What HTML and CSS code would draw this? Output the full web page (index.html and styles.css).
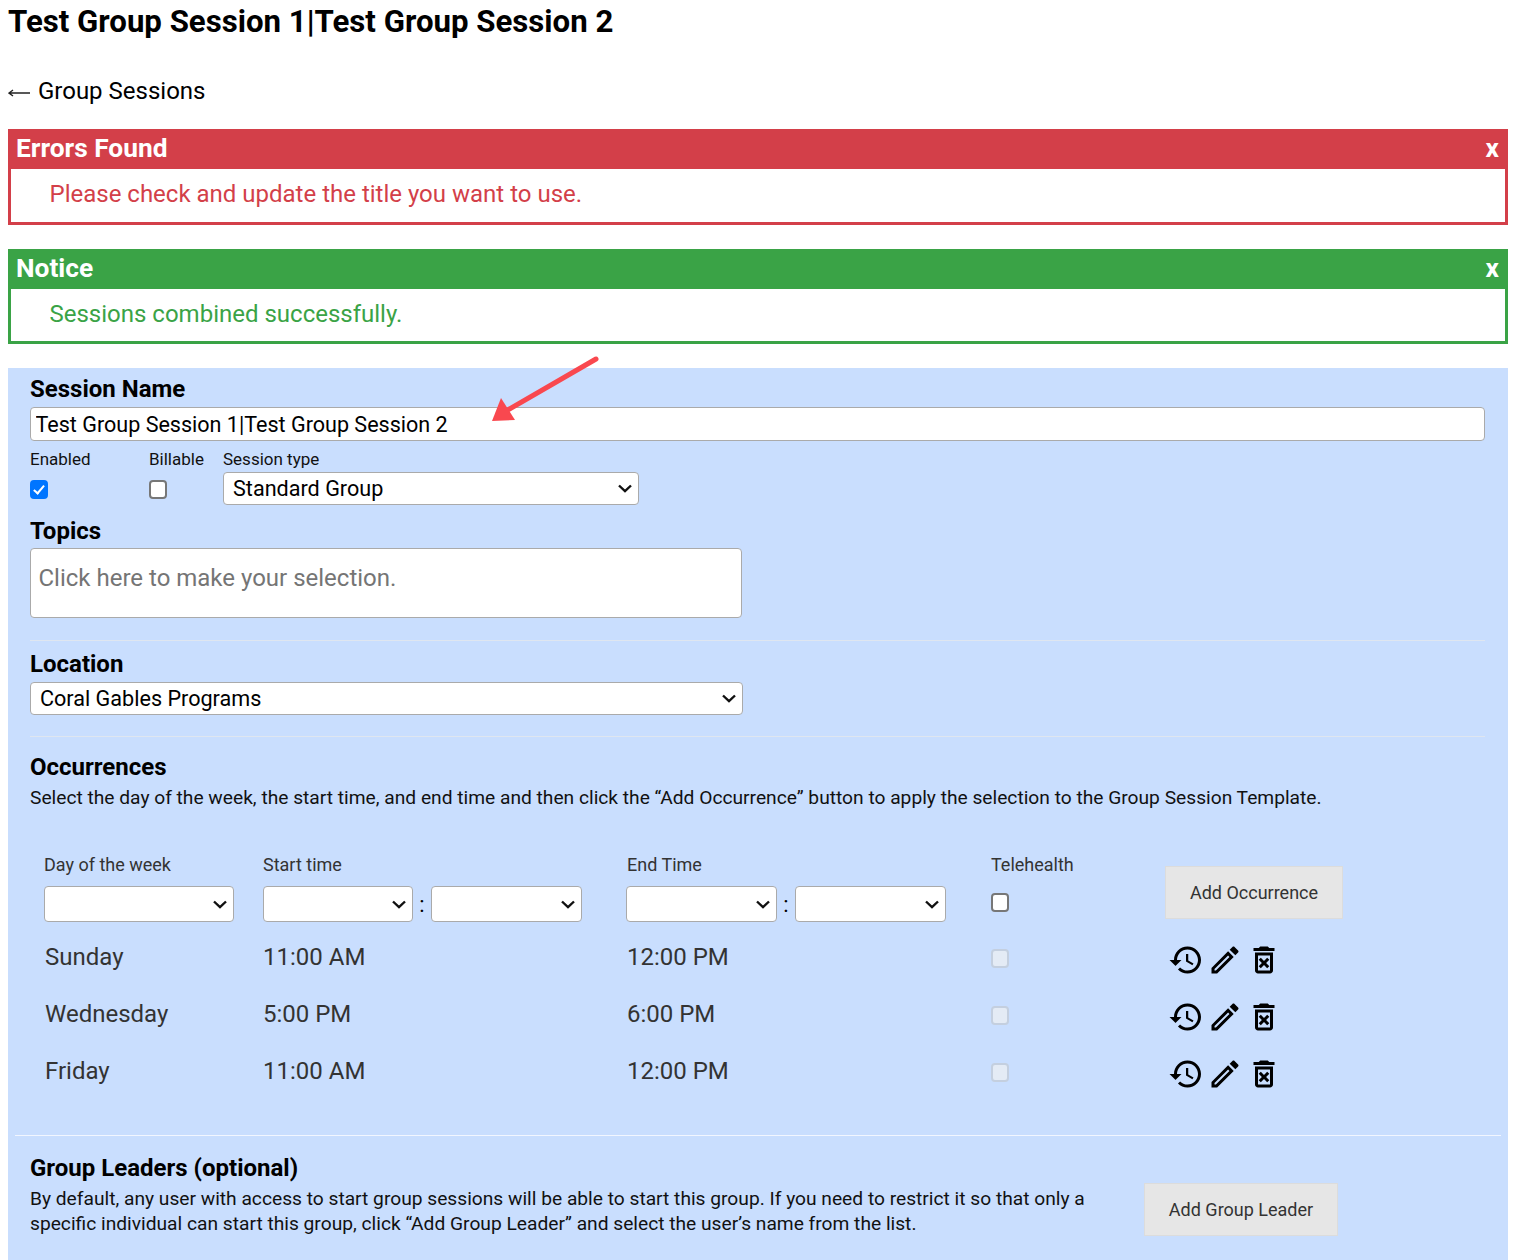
FILE: index.html
```html
<!DOCTYPE html>
<html>
<head>
  <meta charset="UTF-8">
  <title>Test Group Session</title>
  <link rel="stylesheet" href="styles.css">
</head>
<body>
  <h1 class="page-title">Test Group Session 1|Test Group Session 2</h1>
  <a class="back-link" href="#"><svg class="back-arrow" viewBox="0 0 24 10"><path d="M1 5H22M5 2L1 5L5 8" fill="none" stroke="#222" stroke-width="1.4"/></svg> Group Sessions</a>

  <div class="alert alert-error">
    <div class="alert-head"><span>Errors Found</span><span>x</span></div>
    <div class="alert-body">Please check and update the title you want to use.</div>
  </div>

  <div class="alert alert-notice">
    <div class="alert-head"><span>Notice</span><span>x</span></div>
    <div class="alert-body">Sessions combined successfully.</div>
  </div>

  <svg class="callout" viewBox="0 0 110 70" width="110" height="70">
    <path d="M105 5 L15 57" stroke="#f9484f" stroke-width="5" stroke-linecap="round" fill="none"/>
    <path d="M1 67 L10 44 L24 66 Z" fill="#f9484f"/>
  </svg>

  <form class="panel">
    <div class="section">
      <label class="heading">Session Name</label>
      <input class="text-input" type="text" value="Test Group Session 1|Test Group Session 2">

      <div class="options">
        <div class="opt-enabled">
          <label class="small-label">Enabled</label>
          <input class="check" type="checkbox" checked>
        </div>
        <div class="opt-billable">
          <label class="small-label">Billable</label>
          <input class="check" type="checkbox">
        </div>
        <div>
          <label class="small-label">Session type</label>
          <select class="select select-type"><option>Standard Group</option></select>
        </div>
      </div>

      <label class="heading heading-topics">Topics</label>
      <div class="topics-box">Click here to make your selection.</div>

      <hr class="rule rule-topics">

      <label class="heading">Location</label>
      <select class="select select-location"><option>Coral Gables Programs</option></select>

      <hr class="rule rule-location">

      <div class="heading">Occurrences</div>
      <p class="help">Select the day of the week, the start time, and end time and then click the “Add Occurrence” button to apply the selection to the Group Session Template.</p>
    </div>

    <div class="occ-grid">
      <div class="occ-label">Day of the week</div>
      <div class="occ-label">Start time</div>
      <div class="occ-label">End Time</div>
      <div class="occ-label">Telehealth</div>
      <button class="btn btn-occ" type="button">Add Occurrence</button>

      <select class="select occ-day"></select>
      <div class="time-pair">
        <select class="select occ-hour"></select><span class="colon">:</span><select class="select occ-min"></select>
      </div>
      <div class="time-pair">
        <select class="select occ-hour"></select><span class="colon">:</span><select class="select occ-min"></select>
      </div>
      <input class="check occ-check" type="checkbox">
    </div>

    <div class="occ-rows">
      <div class="occ-row">
        <div>Sunday</div><div>11:00 AM</div><div>12:00 PM</div>
        <input class="check" type="checkbox" disabled>
        <div class="actions">
          <svg viewBox="0 0 24 24"><path d="M13 3c-4.97 0-9 4.03-9 9H1l3.89 3.89.07.14L9 12H6c0-3.87 3.13-7 7-7s7 3.13 7 7-3.13 7-7 7c-1.93 0-3.68-.79-4.94-2.06l-1.42 1.42C8.27 19.99 10.51 21 13 21c4.97 0 9-4.03 9-9s-4.03-9-9-9zm-1 5v5l4.28 2.54.72-1.21-3.5-2.08V8H12z"/></svg>
          <svg viewBox="0 0 24 24"><path d="M3 17.25V21h3.75L17.81 9.94l-3.75-3.75L3 17.25zM5.92 19H5v-.92l9.06-9.06.92.92L5.92 19zM20.71 5.63l-2.34-2.34c-.39-.39-1.02-.39-1.41 0l-1.83 1.83 3.75 3.75 1.83-1.83c.39-.39.39-1.02 0-1.41z"/></svg>
          <svg viewBox="0 0 24 24"><path d="M14.12 10.47L12 12.59l-2.13-2.12-1.41 1.41L10.59 14l-2.12 2.12 1.41 1.41L12 15.41l2.12 2.12 1.41-1.41L13.41 14l2.12-2.12zM15.5 4l-1-1h-5l-1 1H5v2h14V4zM6 19c0 1.1.9 2 2 2h8c1.1 0 2-.9 2-2V7H6v12zM8 9h8v10H8V9z"/></svg>
        </div>
      </div>
      <div class="occ-row">
        <div>Wednesday</div><div>5:00 PM</div><div>6:00 PM</div>
        <input class="check" type="checkbox" disabled>
        <div class="actions">
          <svg viewBox="0 0 24 24"><path d="M13 3c-4.97 0-9 4.03-9 9H1l3.89 3.89.07.14L9 12H6c0-3.87 3.13-7 7-7s7 3.13 7 7-3.13 7-7 7c-1.93 0-3.68-.79-4.94-2.06l-1.42 1.42C8.27 19.99 10.51 21 13 21c4.97 0 9-4.03 9-9s-4.03-9-9-9zm-1 5v5l4.28 2.54.72-1.21-3.5-2.08V8H12z"/></svg>
          <svg viewBox="0 0 24 24"><path d="M3 17.25V21h3.75L17.81 9.94l-3.75-3.75L3 17.25zM5.92 19H5v-.92l9.06-9.06.92.92L5.92 19zM20.71 5.63l-2.34-2.34c-.39-.39-1.02-.39-1.41 0l-1.83 1.83 3.75 3.75 1.83-1.83c.39-.39.39-1.02 0-1.41z"/></svg>
          <svg viewBox="0 0 24 24"><path d="M14.12 10.47L12 12.59l-2.13-2.12-1.41 1.41L10.59 14l-2.12 2.12 1.41 1.41L12 15.41l2.12 2.12 1.41-1.41L13.41 14l2.12-2.12zM15.5 4l-1-1h-5l-1 1H5v2h14V4zM6 19c0 1.1.9 2 2 2h8c1.1 0 2-.9 2-2V7H6v12zM8 9h8v10H8V9z"/></svg>
        </div>
      </div>
      <div class="occ-row">
        <div>Friday</div><div>11:00 AM</div><div>12:00 PM</div>
        <input class="check" type="checkbox" disabled>
        <div class="actions">
          <svg viewBox="0 0 24 24"><path d="M13 3c-4.97 0-9 4.03-9 9H1l3.89 3.89.07.14L9 12H6c0-3.87 3.13-7 7-7s7 3.13 7 7-3.13 7-7 7c-1.93 0-3.68-.79-4.94-2.06l-1.42 1.42C8.27 19.99 10.51 21 13 21c4.97 0 9-4.03 9-9s-4.03-9-9-9zm-1 5v5l4.28 2.54.72-1.21-3.5-2.08V8H12z"/></svg>
          <svg viewBox="0 0 24 24"><path d="M3 17.25V21h3.75L17.81 9.94l-3.75-3.75L3 17.25zM5.92 19H5v-.92l9.06-9.06.92.92L5.92 19zM20.71 5.63l-2.34-2.34c-.39-.39-1.02-.39-1.41 0l-1.83 1.83 3.75 3.75 1.83-1.83c.39-.39.39-1.02 0-1.41z"/></svg>
          <svg viewBox="0 0 24 24"><path d="M14.12 10.47L12 12.59l-2.13-2.12-1.41 1.41L10.59 14l-2.12 2.12 1.41 1.41L12 15.41l2.12 2.12 1.41-1.41L13.41 14l2.12-2.12zM15.5 4l-1-1h-5l-1 1H5v2h14V4zM6 19c0 1.1.9 2 2 2h8c1.1 0 2-.9 2-2V7H6v12zM8 9h8v10H8V9z"/></svg>
        </div>
      </div>
    </div>

    <hr class="rule rule-wide">

    <div class="leaders">
      <div class="leaders-text">
        <div class="heading">Group Leaders (optional)</div>
        <p class="help">By default, any user with access to start group sessions will be able to start this group. If you need to restrict it so that only a specific individual can start this group, click “Add Group Leader” and select the user’s name from the list.</p>
      </div>
      <button class="btn btn-leader" type="button">Add Group Leader</button>
    </div>
  </form>
</body>
</html>
```

FILE: styles.css
```css
html {
  height: 1260px;
  overflow: hidden;
}

body {
  position: relative;
  margin: 0;
  padding: 0 17px 0 8px;
  height: 1260px;
  overflow: hidden;
  font-family: Roboto, sans-serif;
  color: #000;
  background: #fff;
}

.page-title {
  margin: 0;
  padding-top: 3px;
  font-size: 31.2px;
  line-height: 37px;
  font-weight: 700;
}

.back-link {
  display: block;
  margin-top: 36px;
  font-size: 24px;
  line-height: 30px;
  color: #000;
  text-decoration: none;
}

.back-arrow {
  width: 24px;
  height: 10px;
  vertical-align: 1px;
}

.alert {
  margin-top: 24px;
  border: 3px solid;
  border-top: 0;
}

.back-link + .alert {
  margin-top: 23px;
}

.alert-head {
  display: flex;
  justify-content: space-between;
  margin: 0 -3px;
  padding: 0 9px 0 8px;
  height: 40px;
  font-size: 26.3px;
  line-height: 38px;
  font-weight: 700;
  color: #fff;
}

.alert-body {
  padding: 9px 0 0 38.5px;
  height: 44px;
  font-size: 24px;
  line-height: 32px;
}

.alert-error {
  border-color: #d33f49;
  color: #d33f49;
}

.alert-error .alert-head {
  background: #d33f49;
}

.alert-notice {
  border-color: #3aa346;
  color: #3aa346;
}

.alert-notice .alert-head {
  background: #3aa346;
}

.alert-notice .alert-body {
  height: 43px;
}

.callout {
  position: absolute;
  left: 491px;
  top: 354px;
  z-index: 2;
}

.panel {
  margin-top: 24px;
  background: #c9defe;
  padding: 7px 7px 0;
  height: 892px;
  box-sizing: border-box;
}

.section {
  padding: 0 16px 0 15px;
}

.heading {
  display: block;
  font-size: 24px;
  line-height: 28px;
  font-weight: 700;
  margin: 0;
}

.text-input {
  display: block;
  box-sizing: border-box;
  width: 100%;
  height: 34px;
  margin-top: 4px;
  padding: 0 4.5px;
  border: 1px solid #aaa;
  border-radius: 4px;
  font-family: inherit;
  font-size: 21.55px;
  background: #fff;
}

.options {
  display: flex;
  margin-top: 8px;
}

.opt-enabled {
  width: 119px;
}

.opt-billable {
  width: 74px;
}

.small-label {
  display: block;
  font-size: 17px;
  line-height: 20px;
  margin-bottom: 3px;
  color: #111;
}

.check {
  appearance: none;
  display: block;
  position: relative;
  box-sizing: border-box;
  width: 18.5px;
  height: 18.5px;
  margin: 11px 0 0 -0.5px;
  border: 2px solid #777;
  border-radius: 4px;
  background: #fff;
}

.check:checked {
  border-color: #0075ff;
  background: #0075ff;
}

.check:checked::after {
  content: "";
  position: absolute;
  left: 4.5px;
  top: 0.5px;
  width: 4px;
  height: 9px;
  border: solid #fff;
  border-width: 0 2.8px 2.8px 0;
  transform: rotate(40deg);
}

.check:disabled {
  border-color: #c4cfdf;
  background: #e4ebf5;
}

.select {
  appearance: none;
  box-sizing: border-box;
  font-family: inherit;
  font-size: 21.6px;
  padding: 0 28px 0 9px;
  border: 1px solid #aaa;
  border-radius: 4px;
  color: #000;
  background: #fff url("data:image/svg+xml,%3Csvg xmlns='http://www.w3.org/2000/svg' width='14' height='9'%3E%3Cpath d='M1 1.5L7 7.2L13 1.5' fill='none' stroke='%23111' stroke-width='2.4'/%3E%3C/svg%3E") no-repeat right 6px center;
}

.select-type {
  display: block;
  width: 416px;
  height: 33px;
}

.heading-topics {
  margin-top: 12px;
}

.topics-box {
  box-sizing: border-box;
  width: 712px;
  height: 70px;
  margin-top: 3px;
  padding: 14px 7.5px;
  border: 1px solid #aaa;
  border-radius: 4px;
  background: #fff;
  font-size: 24px;
  line-height: 30px;
  color: #757575;
}

.rule {
  border: 0;
  border-top: 1px solid #dfe6f0;
  margin: 0;
}

.rule-topics {
  margin: 22px 0 9px;
}

.select-location {
  display: block;
  width: 713px;
  height: 33px;
  margin-top: 4px;
}

.rule-location {
  margin: 21px 0 16px;
}

.help {
  margin: 4px 0 0;
  font-size: 19.2px;
  line-height: 25px;
  color: #111;
}

.occ-grid {
  display: grid;
  grid-template-columns: 219px 364px 364px 174px 178px;
  grid-template-rows: 36px 41px;
  margin: 40px 0 0 29px;
  align-items: start;
}

.occ-label {
  font-size: 18px;
  line-height: 24px;
  color: #333;
  padding-top: 3px;
}

.btn {
  border: 1px solid #dcdcdc;
  background: #e6e6e6;
  color: #333;
  font-family: inherit;
  font-size: 18px;
  padding: 0;
}

.btn-occ {
  grid-column: 5;
  grid-row: 1 / 3;
  width: 178px;
  height: 53px;
  margin-top: 16px;
}

.occ-day {
  width: 190px;
  height: 36px;
}

.time-pair {
  display: flex;
  align-items: center;
}

.time-pair + .time-pair {
  margin-left: -1px;
}

.time-pair + .time-pair .occ-hour {
  width: 151px;
}

.occ-hour {
  width: 150px;
  height: 36px;
}

.occ-min {
  width: 151px;
  height: 36px;
}

.colon {
  width: 18px;
  text-align: center;
  font-size: 22px;
}

.occ-check {
  margin-top: 7px;
}

.occ-rows {
  margin: 14px 0 0 29px;
}

.occ-row {
  display: grid;
  grid-template-columns: 219px 364px 364px 174px 178px;
  height: 57px;
  align-items: start;
  font-size: 24px;
  line-height: 32px;
  color: #333;
}

.occ-row div:first-child {
  padding-left: 1px;
}

.occ-row .check {
  margin-top: 8px;
}

.actions {
  display: flex;
  gap: 3px;
  margin: 1px 0 0 3px;
}

.actions svg {
  width: 36px;
  height: 36px;
  display: block;
  fill: #000;
}

.rule-wide {
  margin-top: 23px;
  border-top-color: #f2f6ff;
}

.leaders {
  display: flex;
  align-items: flex-start;
  padding: 18px 15px 0;
}

.leaders-text {
  width: 1114px;
}

.btn-leader {
  width: 194px;
  height: 53px;
  margin-top: 29px;
}
```
